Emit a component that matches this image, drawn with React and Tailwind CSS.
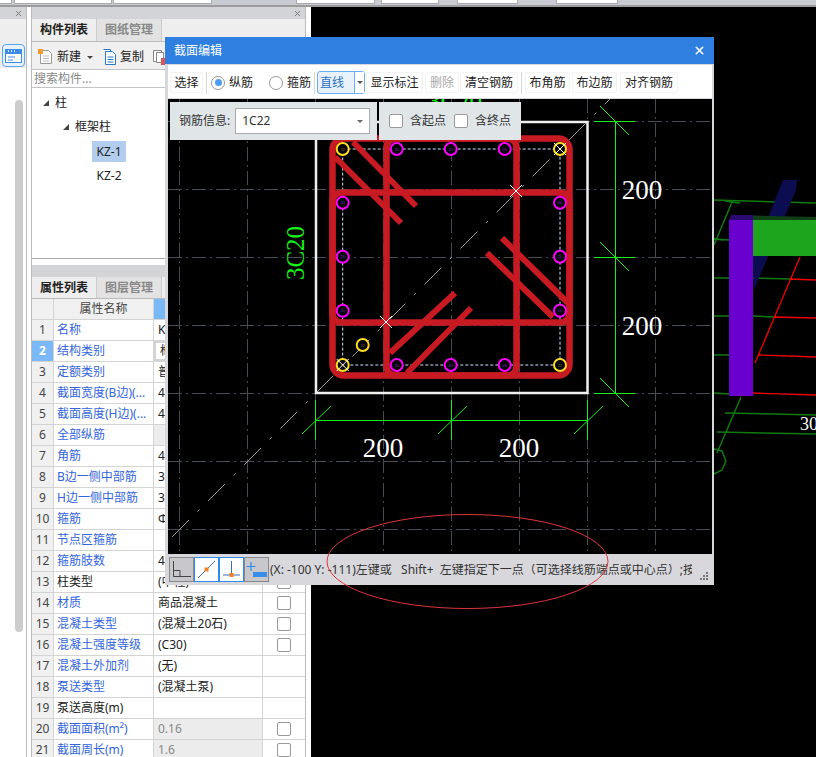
import { X } from 'lucide-react';

const rows = [
  { name: '名称', value: 'KZ-1', blue: true },
  { name: '结构类别', value: '框架柱', blue: true, active: true },
  { name: '定额类别', value: '普通柱', blue: true },
  { name: '截面宽度(B边)(...', value: '400', blue: true, check: true },
  { name: '截面高度(H边)(...', value: '400', blue: true, check: true },
  { name: '全部纵筋', value: '', blue: true, shade: true, check: true },
  { name: '角筋', value: '4C22', blue: true, check: true },
  { name: 'B边一侧中部筋', value: '3C20', blue: true, check: true },
  { name: 'H边一侧中部筋', value: '3C20', blue: true, check: true },
  { name: '箍筋', value: 'Φ8@100', blue: true, check: true },
  { name: '节点区箍筋', value: '', blue: true, check: true },
  { name: '箍筋肢数', value: '4*4', blue: true, check: true },
  { name: '柱类型', value: '(中柱)', check: true },
  { name: '材质', value: '商品混凝土', blue: true, check: true },
  { name: '混凝土类型', value: '(混凝土20石)', blue: true, check: true },
  { name: '混凝土强度等级', value: '(C30)', blue: true, check: true },
  { name: '混凝土外加剂', value: '(无)', blue: true },
  { name: '泵送类型', value: '(混凝土泵)', blue: true },
  { name: '泵送高度(m)', value: '' },
  { name: '截面面积(m²)', value: '0.16', blue: true, gray: true, check: true },
  { name: '截面周长(m)', value: '1.6', blue: true, gray: true, check: true },
];

const gridX = [179.5, 247.5, 315.5, 383.5, 451.5, 519.5, 587.5, 655.5];
const gridY = [121.5, 189.5, 257.5, 325.5, 393.5, 461.5, 529.5];
const magenta = [
  [396.7, 149], [450.7, 149], [504.7, 149],
  [396.7, 365], [450.7, 365], [504.7, 365],
  [342.7, 202.7], [342.7, 256.7], [342.7, 310.7],
  [560, 202.7], [560, 256.7], [560, 310.7],
];
const yellow = [[342.7, 149], [560, 149], [342.7, 365], [560, 365], [362.7, 345]];
const hooks = [
  [353, 142, 416, 206], [335, 157, 401, 223],
  [502, 238, 568, 303], [487, 253, 553, 317],
  [455, 293, 390, 353], [471, 308, 407, 373],
];
const crosses = [[516, 191], [386, 322], [560, 149], [342.7, 365]];

function Checkbox() {
  return <span className="block h-[14px] w-[14px] rounded-[2px] border border-[#999] bg-white" />;
}

function Radio({ on }) {
  return (
    <span className="flex h-[14px] w-[14px] items-center justify-center rounded-full border border-[#999] bg-white">
      {on && <span className="h-[7px] w-[7px] rounded-full bg-[#4a9cf6]" />}
    </span>
  );
}

function Sep({ className }) {
  return <span className={`h-[22px] w-px bg-[#d8d8d8] ${className}`} />;
}

function ToolBtn({ className, children }) {
  return (
    <span className={`flex h-[21px] items-center justify-center rounded-[2px] border border-[#f3f3f3] text-[#222] ${className}`}>
      {children}
    </span>
  );
}

function PanelHeader() {
  return (
    <div className="flex h-[12px] items-center justify-end bg-[#d2d4d8] pr-[3px]">
      <X size={9} strokeWidth={2.5} className="text-[#777]" />
    </div>
  );
}

function Tabs({ first, second, className }) {
  return (
    <div className={`flex border-b border-[#bbb] bg-[#eee] ${className}`}>
      <span className="flex w-[65px] items-center justify-center border-r border-[#ccc] font-bold text-[#222]">{first}</span>
      <span className="flex w-[65px] items-center justify-center border-r border-[#ccc] bg-[#e2e2e2] font-bold text-[#888]">{second}</span>
    </div>
  );
}

function LeftDock() {
  return (
    <div className="flex w-[27px] flex-col border-r border-[#bbb]">
      <PanelHeader />
      <div className="h-[49px] bg-[#eee] pl-[2px] pt-[25px]">
        <div className="flex h-[23px] w-[23px] items-center justify-center rounded-[4px] border border-[#5aa5f5] bg-[#e8f2fd]">
          <svg width="17" height="14" viewBox="0 0 17 14">
            <rect x="0" y="0" width="17" height="14" fill="#3a8ee8" />
            <rect x="1" y="5" width="15" height="8" fill="#fff" />
            <path d="M3 2h1M6 2h1M9 2h1" stroke="#fff" strokeWidth="1.4" />
            <path d="M3 8h7M3 11h5" stroke="#3a8ee8" strokeWidth="1.2" />
          </svg>
        </div>
      </div>
      <div className="flex-1 bg-white pl-[15px] pt-[32px]">
        <div className="h-[532px] w-[8px] rounded-[4px] bg-[#ccc]" />
      </div>
    </div>
  );
}

function ComponentPanel() {
  return (
    <>
      <PanelHeader />
      <Tabs first="构件列表" second="图纸管理" className="h-[23px]" />
      <div className="flex h-[27px] items-center bg-[#f0f0f0] pl-[6px] pt-[3px] text-[#222]">
        <svg width="15" height="16" viewBox="0 0 15 16">
          <path d="M2.5 1.5h8l3 3v10h-11z" fill="#fff" stroke="#999" />
          <path d="M5 7h6M5 9.5h6M5 12h6" stroke="#bbb" />
          <rect x="0" y="0" width="5" height="5" fill="#f29a2e" />
        </svg>
        <span className="ml-[4px]">新建</span>
        <span className="ml-[6px] h-0 w-0 border-x-[3px] border-t-[3px] border-x-transparent border-t-[#444]" />
        <svg width="14" height="16" viewBox="0 0 14 16" className="ml-[9px]">
          <path d="M1.5 0.5h7v2M3.5 2.5h7l3 3v10h-10z" fill="#fff" stroke="#2a78c8" />
          <path d="M5.5 8h6M5.5 10.5h6M5.5 13h6" stroke="#2a78c8" />
        </svg>
        <span className="ml-[4px]">复制</span>
        <svg width="15" height="16" viewBox="0 0 15 16" className="ml-[9px]">
          <path d="M0.5 1.5h8v11h-8z" fill="#fff" stroke="#888" />
          <path d="M3.5 3.5h7v10h-7z" fill="#fff" stroke="#888" />
          <rect x="8" y="9" width="7" height="7" fill="#dd5555" />
        </svg>
      </div>
      <div className="flex h-[19px] items-center border-y border-[#c4c4c4] bg-white pl-[2px] text-[#888]">搜索构件...</div>
      <div className="h-[171px] border-b border-[#aaa] bg-white text-[#222]">
        <div className="flex h-[24px] items-center pl-[11px] pt-[6px]">
          <span className="h-0 w-0 border-b-[6px] border-l-[6px] border-b-[#444] border-l-transparent" />
          <span className="ml-[6px]">柱</span>
        </div>
        <div className="flex h-[24px] items-center pl-[31px] pt-[6px]">
          <span className="h-0 w-0 border-b-[6px] border-l-[6px] border-b-[#444] border-l-transparent" />
          <span className="ml-[6px]">框架柱</span>
        </div>
        <div className="ml-[60px] mt-[5px] flex h-[21px] w-[34px] items-center justify-center bg-[#b3cdee]">KZ-1</div>
        <div className="ml-[60px] mt-[3px] flex h-[21px] w-[34px] items-center justify-center">KZ-2</div>
      </div>
    </>
  );
}

function PropertyPanel() {
  return (
    <>
      <PanelHeader />
      <Tabs first="属性列表" second="图层管理" className="h-[22px]" />
      <div className="grid h-[21px] grid-cols-[22px_100px_109px_41px] border-b border-[#d4d4d4] text-[#444]">
        <span className="border-r border-[#d4d4d4] bg-[#f0f0f0]" />
        <span className="flex items-center justify-center border-r border-[#d4d4d4] bg-[#f0f0f0]">属性名称</span>
        <span className="flex items-center justify-center bg-[#7ab8f8] text-white">属性值</span>
        <span className="flex items-center justify-center bg-[#f0f0f0]">附加</span>
      </div>
      {rows.map((row, i) => (
        <div key={row.name} className="grid h-[21px] grid-cols-[22px_100px_109px_41px] border-b border-[#d4d4d4]">
          <span className={`flex items-center justify-center border-r border-[#d4d4d4] ${row.active ? 'bg-[#7ab8f8] font-bold text-white' : 'bg-[#f0f0f0] text-[#444]'}`}>
            {i + 1}
          </span>
          <span className={`flex items-center overflow-hidden whitespace-nowrap border-r border-[#d4d4d4] pl-[3px] ${row.blue ? 'text-[#3366dd]' : 'text-[#222]'}`}>
            {row.name}
          </span>
          <span className={`flex items-center overflow-hidden whitespace-nowrap border-r border-[#d4d4d4] pl-[4px] ${row.active ? 'border-2 border-[#777]' : ''} ${row.gray || row.shade ? 'bg-[#ececec]' : ''} ${row.gray ? 'text-[#888]' : 'text-[#222]'}`}>
            {row.value}
          </span>
          <span className="flex items-center justify-center">{row.check && <Checkbox />}</span>
        </div>
      ))}
    </>
  );
}

function Scene() {
  return (
    <svg className="h-full w-full" viewBox="311 7 505 750">
      <g stroke="#0f7a0f" strokeWidth="1.5" fill="none">
        <path d="M714 200L816 203M714 239L729 240M714 278L729 278M753 278L790 279M714 316L729 316M753 316L774 317M714 355L729 355M714 393L729 394" />
        <path d="M732 202L714 245M741 397L717 453M725 413L816 415M717 432L816 434M725 201L740 203M714 239L724 240" />
        <path d="M714 449L722 451L726 461L722 470L714 474" />
      </g>
      <polygon points="783,180 797,180 796,190 754,290 753,255" fill="#0c0c50" />
      <g stroke="#f00000" strokeWidth="1.3" fill="none">
        <path d="M790 279L816 280M774 317L816 318M758 355L816 357M753 393L816 395M800 257L755 363" />
      </g>
      <polygon points="733,215 816,217 816,222 729,222" fill="#0f3f14" />
      <rect x="729" y="220" width="24" height="176" fill="#6a00d0" />
      <polygon points="731,215 753,215 753,220 729,220" fill="#2a0a70" />
      <rect x="753" y="220" width="63" height="36" fill="#1ea51e" />
      <text x="800" y="430" fill="#fff" fontSize="18" fontFamily="Liberation Serif, serif">30</text>
    </svg>
  );
}

function Drawing() {
  return (
    <svg width="544" height="455" viewBox="168 99 544 455" className="block">
      <g stroke="#464c55" strokeWidth="1" strokeDasharray="14 4 2 4" fill="none">
        {gridX.map(x => <line key={x} x1={x} y1="99" x2={x} y2="554" />)}
        {gridY.map(y => <line key={y} x1="168" y1={y} x2="712" y2={y} />)}
      </g>
      <line x1="172" y1="537" x2="610" y2="99" stroke="#999" strokeWidth="1" strokeDasharray="24 12 3 12" />
      <rect x="316" y="122" width="271.5" height="271" fill="none" stroke="#f0f0f0" strokeWidth="2.5" />
      <rect x="342.7" y="149" width="217.3" height="216" fill="none" stroke="#cfe3ff" strokeWidth="1" strokeDasharray="3 2" />
      <g fill="none" stroke="#c81a22" strokeWidth="6.5">
        <rect x="332.5" y="138.5" width="237" height="237" rx="11" />
        <rect x="386.5" y="138.5" width="130" height="237" rx="9" />
        <rect x="332.5" y="192.5" width="237" height="130" rx="9" />
        {hooks.map(h => <line key={h[0]} x1={h[0]} y1={h[1]} x2={h[2]} y2={h[3]} strokeWidth="6" />)}
      </g>
      <g fill="#000" strokeWidth="2">
        {magenta.map(([x, y]) => <circle key={`${x}-${y}`} cx={x} cy={y} r="6" stroke="#ff00ff" />)}
        {yellow.map(([x, y]) => <circle key={`${x}-${y}`} cx={x} cy={y} r="6" stroke="#ffdd22" />)}
      </g>
      <g fontSize="4" textAnchor="middle" fontFamily="Liberation Sans, sans-serif">
        {magenta.map(([x, y]) => <text key={`${x}-${y}`} x={x} y={y + 1.5} fill="#8a2bd8">20</text>)}
        {yellow.map(([x, y]) => <text key={`${x}-${y}`} x={x} y={y + 1.5} fill="#8a7a20">22</text>)}
      </g>
      <g stroke="#fff" strokeWidth="1">
        {crosses.map(([x, y]) => (
          <g key={x}>
            <line x1={x - 6} y1={y - 6} x2={x + 6} y2={y + 6} />
            <line x1={x - 6} y1={y + 6} x2={x + 6} y2={y - 6} />
          </g>
        ))}
      </g>
      <g stroke="#16f016" strokeWidth="1" fill="none">
        <path d="M615.5 121V393M594 121.5H635M594 257.5H635M594 393.5H635M600 106L629 135M600 242L629 271M600 378L629 407" />
        <path d="M315 420.5H587M315.5 400V440M451.5 400V440M587.5 400V440M302 434L331 406M438 434L467 406M574 434L603 406" />
      </g>
      <g fill="#fff" fontSize="27" textAnchor="middle" fontFamily="Liberation Serif, serif">
        <text x="642" y="199">200</text>
        <text x="642" y="335">200</text>
        <text x="383" y="457">200</text>
        <text x="519" y="457">200</text>
      </g>
      <g fill="#16f016" fontSize="25" textAnchor="middle" fontFamily="Liberation Serif, serif">
        <text x="455" y="110">3C20</text>
        <text transform="translate(304 253) rotate(-90)">3C20</text>
      </g>
    </svg>
  );
}

function StatusButton({ active, children }) {
  return (
    <span className={`flex h-[25px] w-[25px] items-center justify-center border ${active ? 'border-[#2d8cf0] bg-white' : 'border-[#888] bg-[#c8c8cc]'}`}>
      {children}
    </span>
  );
}

function SectionDialog() {
  return (
    <div className="absolute left-[165px] top-[37px] flex h-[548px] w-[549px] flex-col bg-[#d8d8dc] pl-[3px] pr-[2px]">
      <div className="-ml-[3px] -mr-[2px] flex h-[27px] items-center justify-between bg-[#2e7fdf] pl-[9px] pr-[8px] text-white">
        <span>截面编辑</span>
        <X size={13} strokeWidth={3} />
      </div>
      <div className="mt-px flex h-[33px] items-center bg-white pl-[2px] pt-[2px] text-[#222]">
        <ToolBtn className="w-[33px]">选择</ToolBtn>
        <Sep className="ml-[3px]" />
        <span className="ml-[4px]"><Radio on /></span>
        <span className="ml-[4px]">纵筋</span>
        <span className="ml-[16px]"><Radio /></span>
        <span className="ml-[4px]">箍筋</span>
        <Sep className="ml-[3px]" />
        <span className="ml-[2px] flex h-[23px] w-[48px] items-center rounded-[3px] border border-[#6aaef5] bg-[#e8f2fd] text-[#2a6fc0]">
          <span className="w-[36px] pl-[2px]">直线</span>
          <span className="flex h-full flex-1 items-center justify-center border-l border-[#6aaef5] bg-white">
            <span className="h-0 w-0 border-x-[3px] border-t-[3px] border-x-transparent border-t-[#555]" />
          </span>
        </span>
        <ToolBtn className="ml-px w-[57px]">显示标注</ToolBtn>
        <ToolBtn className="ml-[2px] w-[34px]"><span className="text-[#aaa]">删除</span></ToolBtn>
        <ToolBtn className="ml-px w-[58px]">清空钢筋</ToolBtn>
        <Sep className="ml-[3px]" />
        <ToolBtn className="ml-[3px] w-[45px]">布角筋</ToolBtn>
        <ToolBtn className="ml-[2px] w-[45px]">布边筋</ToolBtn>
        <ToolBtn className="ml-[3px] w-[58px]">对齐钢筋</ToolBtn>
      </div>
      <div className="relative mt-px h-[455px] bg-black">
        <Drawing />
        <div className="absolute left-[2px] top-[3px] flex h-[38px] w-[207px] items-center bg-[#e0e6e8] pl-[9px] text-[#333]">
          <span>钢筋信息:</span>
          <span className="ml-[5px] flex h-[26px] w-[135px] items-center justify-between border border-[#aaa] bg-white pl-[6px] pr-[6px]">
            1C22
            <span className="h-0 w-0 border-x-[3px] border-t-[3px] border-x-transparent border-t-[#666]" />
          </span>
        </div>
        <div className="absolute left-[211px] top-[3px] flex h-[38px] w-[142px] items-center bg-[#e0e6e8] pl-[10px] text-[#333]">
          <Checkbox />
          <span className="ml-[7px]">含起点</span>
          <span className="ml-[8px]"><Checkbox /></span>
          <span className="ml-[7px]">含终点</span>
        </div>
      </div>
      <div className="flex h-[31px] items-center bg-[#d8d8dc] pl-px text-[#333]">
        <StatusButton>
          <svg width="19" height="17" viewBox="0 0 19 17" fill="none" stroke="#444">
            <path d="M1.5 0V15.5H19M1.5 9.5H8V15.5" />
          </svg>
        </StatusButton>
        <StatusButton active>
          <svg width="19" height="19" viewBox="0 0 19 19" fill="none">
            <path d="M1 18L18 1" stroke="#3a6fb8" />
            <rect x="7.5" y="7.5" width="4" height="4" fill="#f0802a" />
          </svg>
        </StatusButton>
        <StatusButton active>
          <svg width="19" height="19" viewBox="0 0 19 19" fill="none">
            <path d="M9.5 1V15M1 15H18" stroke="#3a6fb8" />
            <rect x="7.5" y="13" width="4" height="4" fill="#f0802a" />
          </svg>
        </StatusButton>
        <StatusButton>
          <svg width="21" height="17" viewBox="0 0 21 17" fill="none">
            <path d="M5 1V10M0.5 5.5H9.5" stroke="#2d8cf0" strokeWidth="1.2" />
            <rect x="7" y="11" width="14" height="5" fill="#3a8ee8" />
          </svg>
        </StatusButton>
        <span className="ml-px w-[422px] overflow-hidden whitespace-pre">(X: -100 Y: -111)左键或   Shift+  左键指定下一点（可选择线筋端点或中心点）;按</span>
        <svg width="9" height="8" viewBox="0 0 9 8" className="ml-[8px] mt-[12px]" fill="#777">
          <rect x="6" y="0" width="2" height="2" />
          <rect x="3" y="3" width="2" height="2" />
          <rect x="6" y="3" width="2" height="2" />
          <rect x="0" y="6" width="2" height="2" />
          <rect x="3" y="6" width="2" height="2" />
          <rect x="6" y="6" width="2" height="2" />
        </svg>
      </div>
    </div>
  );
}

export default function App() {
  return (
    <div className="relative flex h-[757px] w-[816px] flex-col overflow-hidden bg-white font-['Noto_Sans','Noto_Sans_CJK_SC',sans-serif] text-[12px] leading-none">
      {/* top strip */}
      <div className="flex h-[7px] shrink-0 items-start border-b-2 border-[#9c9c9c] bg-[#c8ccd2]">
        <span className="h-[4px] w-[12px] border-b border-r border-[#aaa] bg-white" />
        <span className="ml-[2px] h-[4px] w-[98px] border-b border-x border-[#aaa] bg-white" />
        <span className="ml-px h-[4px] w-[99px] border-b border-x border-[#aaa] bg-white" />
        <span className="ml-[84px] h-[4px] w-[79px] border-b border-x border-[#aaa] bg-white" />
        <span className="ml-[6px] h-[4px] w-[58px] border-b border-x border-[#aaa] bg-white" />
        <span className="ml-[18px] h-[4px] w-[61px] border-b border-x border-[#aaa] bg-white" />
        <span className="ml-[38px] h-[4px] w-[62px] border-b border-x border-[#aaa] bg-white" />
      </div>

      <div className="flex h-[750px] overflow-hidden">
        <LeftDock />
        <div className="w-[4px]" />
        <div className="w-[275px] border-x border-[#bbb]">
          <ComponentPanel />
          <div className="h-[6px] bg-white" />
          <PropertyPanel />
        </div>
        <div className="w-[5px]" />
        <div className="flex-1 bg-black">
          <Scene />
        </div>
      </div>

      <SectionDialog />

      {/* hand-drawn markup ellipse */}
      <svg className="absolute left-[320px] top-[510px]" width="295" height="105" viewBox="320 510 295 105" fill="none">
        <ellipse cx="467.5" cy="561.5" rx="140.5" ry="47" stroke="#e0353b" strokeWidth="1" />
      </svg>
    </div>
  );
}
